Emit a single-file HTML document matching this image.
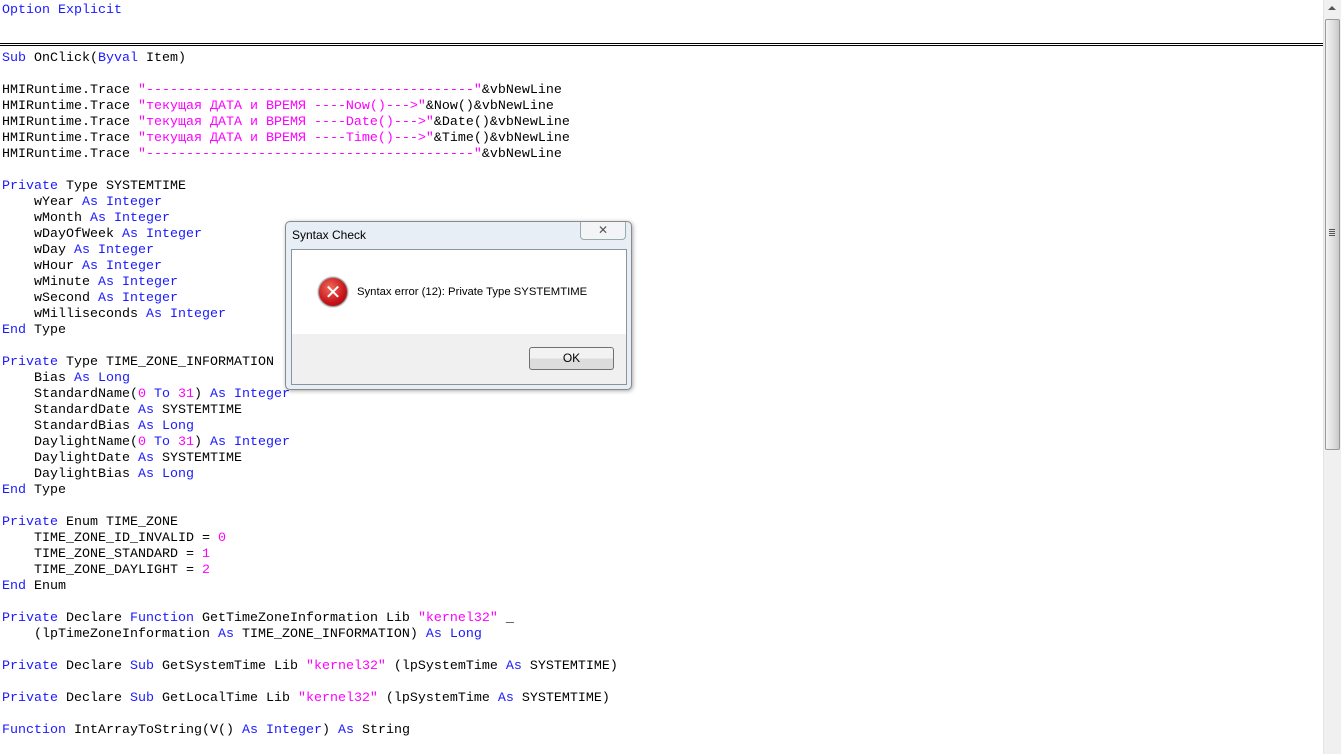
<!DOCTYPE html><html><head><meta charset="utf-8"><style>
body{margin:0;width:1341px;height:754px;background:#fff;position:relative;overflow:hidden}
pre{position:absolute;left:2px;top:3px;margin:0;font:13.33px/16px "Liberation Mono","DejaVu Sans Mono",monospace;color:#000}
.k{color:#1a1aff}.s{color:#ff00ff}
.dl{position:absolute;left:0;width:1323px;height:1px;background:#000}
.sb{position:absolute;left:1323px;top:0;width:18px;height:754px;background:#f0f0f0;border-left:1px solid #e3e3e3}
.dlg{position:absolute;left:285px;top:221px;width:345px;height:167px;border:1px solid #8a8a8a;border-radius:5px;background:#e8eef5;box-shadow:1px 1px 4px rgba(0,0,0,.35);font-family:"Liberation Sans",sans-serif}
</style></head><body>
<pre><span class="k">Option Explicit</span>


<span class="k">Sub</span> OnClick(<span class="k">Byval</span> Item)

HMIRuntime.Trace <span class="s">"-----------------------------------------"</span>&amp;vbNewLine
HMIRuntime.Trace <span class="s">"текущая ДАТА и ВРЕМЯ ----Now()---&gt;"</span>&amp;Now()&amp;vbNewLine
HMIRuntime.Trace <span class="s">"текущая ДАТА и ВРЕМЯ ----Date()---&gt;"</span>&amp;Date()&amp;vbNewLine
HMIRuntime.Trace <span class="s">"текущая ДАТА и ВРЕМЯ ----Time()---&gt;"</span>&amp;Time()&amp;vbNewLine
HMIRuntime.Trace <span class="s">"-----------------------------------------"</span>&amp;vbNewLine

<span class="k">Private</span> Type SYSTEMTIME
    wYear <span class="k">As Integer</span>
    wMonth <span class="k">As Integer</span>
    wDayOfWeek <span class="k">As Integer</span>
    wDay <span class="k">As Integer</span>
    wHour <span class="k">As Integer</span>
    wMinute <span class="k">As Integer</span>
    wSecond <span class="k">As Integer</span>
    wMilliseconds <span class="k">As Integer</span>
<span class="k">End</span> Type

<span class="k">Private</span> Type TIME_ZONE_INFORMATION
    Bias <span class="k">As Long</span>
    StandardName(<span class="s">0</span> <span class="k">To</span> <span class="s">31</span>) <span class="k">As Integer</span>
    StandardDate <span class="k">As</span> SYSTEMTIME
    StandardBias <span class="k">As Long</span>
    DaylightName(<span class="s">0</span> <span class="k">To</span> <span class="s">31</span>) <span class="k">As Integer</span>
    DaylightDate <span class="k">As</span> SYSTEMTIME
    DaylightBias <span class="k">As Long</span>
<span class="k">End</span> Type

<span class="k">Private</span> Enum TIME_ZONE
    TIME_ZONE_ID_INVALID = <span class="s">0</span>
    TIME_ZONE_STANDARD = <span class="s">1</span>
    TIME_ZONE_DAYLIGHT = <span class="s">2</span>
<span class="k">End</span> Enum

<span class="k">Private</span> Declare <span class="k">Function</span> GetTimeZoneInformation Lib <span class="s">"kernel32"</span> _
    (lpTimeZoneInformation <span class="k">As</span> TIME_ZONE_INFORMATION) <span class="k">As Long</span>

<span class="k">Private</span> Declare <span class="k">Sub</span> GetSystemTime Lib <span class="s">"kernel32"</span> (lpSystemTime <span class="k">As</span> SYSTEMTIME)

<span class="k">Private</span> Declare <span class="k">Sub</span> GetLocalTime Lib <span class="s">"kernel32"</span> (lpSystemTime <span class="k">As</span> SYSTEMTIME)

<span class="k">Function</span> IntArrayToString(V() <span class="k">As Integer</span>) <span class="k">As</span> String</pre>
<div class="dl" style="top:43px"></div><div class="dl" style="top:45px"></div>
<div class="sb">
<div style="position:absolute;left:4px;top:6px;width:0;height:0;border-left:4px solid transparent;border-right:4px solid transparent;border-bottom:4px solid #555"></div>
<div style="position:absolute;left:1px;top:19px;width:13px;height:429px;border:1px solid #999;border-radius:2px;background:linear-gradient(90deg,#f4f4f4,#dcdcdc 60%,#c8c8c8)"></div>
<div style="position:absolute;left:5px;top:229px;width:6px;height:7px;background:repeating-linear-gradient(#555 0 1px,transparent 1px 2px)"></div>
</div>
<div class="dlg">
<div style="position:absolute;left:6px;top:6px;font-size:12px;color:#000">Syntax Check</div>
<div style="position:absolute;left:294px;top:0;width:44px;height:17px;border:1px solid #9aa;border-top:none;border-radius:0 0 4px 4px;background:#f2f4f6;text-align:center;font-size:12px;line-height:16px;color:#555">✕</div>
<div style="position:absolute;left:5px;top:27px;width:334px;height:134px;border:1px solid #8c9399;background:#f0f0f0">
<div style="position:absolute;left:0;top:0;width:334px;height:84px;background:#fff"></div>
<div style="position:absolute;left:26px;top:27px;width:28px;height:28px;border-radius:50%;background:radial-gradient(circle at 40% 35%,#f06a5a,#c8141a 60%,#8a0a0e);border:1px solid #999;box-shadow:0 0 0 1px #ddd"></div>
<div style="position:absolute;left:27px;top:27px;width:28px;height:28px;color:#fff;font:bold 20px/30px 'DejaVu Sans',sans-serif;text-align:center">✕</div>
<div style="position:absolute;left:65px;top:36px;font-size:11.3px;color:#000">Syntax error (12): Private Type SYSTEMTIME</div>
<div style="position:absolute;left:237px;top:97px;width:83px;height:21px;border:1px solid #707070;border-radius:3px;background:linear-gradient(#f2f2f2 50%,#dcdcdc 50%);text-align:center;font-size:12px;line-height:21px">OK</div>
</div>
</div>
</body></html>
